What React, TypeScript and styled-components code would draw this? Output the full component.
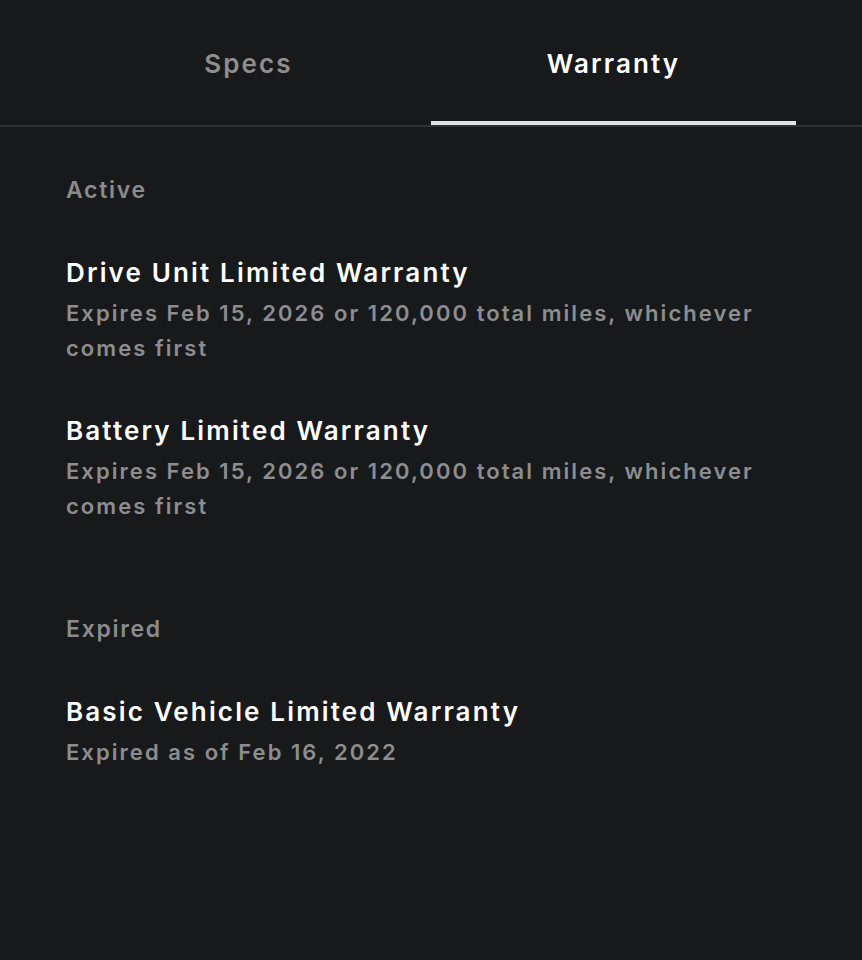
import styled, { createGlobalStyle } from 'styled-components'

const Global = createGlobalStyle`
    html, body {
        margin: 0;
        padding: 0;
        background: #18191b;
    }
    body {
        font-family: Inter, "Open Sans", sans-serif;
        -webkit-font-smoothing: antialiased;
    }
`

const Page = styled.div`
    width: 862px;
    height: 960px;
    background: #18191b;
    color: #ffffff;
`

const TabBar = styled.div`
    display: flex;
    padding: 0 66px;
    height: 125px;
    border-bottom: 2px solid #2f3033;
`

const Tab = styled.div<{ $active?: boolean }>`
    flex: 1;
    display: flex;
    align-items: center;
    justify-content: center;
    padding-top: 1px;
    font-size: 26px;
    font-weight: 600;
    letter-spacing: 2.1px;
    color: ${p => (p.$active ? '#ffffff' : '#8e8e8e')};
    box-shadow: ${p => (p.$active ? 'inset 0 -4px 0 #e2e2e2' : 'none')};
`

const Content = styled.div`
    padding: 48px 66px 0;
    display: flex;
    flex-direction: column;
`

const Section = styled.section`
    display: flex;
    flex-direction: column;
    & + & {
        margin-top: 90px;
    }
`

const SectionLabel = styled.div`
    font-size: 23px;
    font-weight: 600;
    letter-spacing: 1.7px;
    color: #8a8b8d;
    line-height: 30px;
    margin-bottom: 51px;
`

const Item = styled.div`
    display: flex;
    flex-direction: column;
    & + & {
        margin-top: 48px;
    }
`

const Title = styled.div`
    font-size: 26px;
    font-weight: 600;
    letter-spacing: 2.15px;
    line-height: 34px;
    color: #ffffff;
    margin-bottom: 6px;
`

const Detail = styled.div`
    font-size: 22px;
    font-weight: 600;
    letter-spacing: 2.05px;
    line-height: 35px;
    color: #8c8d8f;
`

const sections = [
    {
        label: 'Active',
        items: [
            {
                title: 'Drive Unit Limited Warranty',
                detail: 'Expires Feb 15, 2026 or 120,000 total miles, whichever comes first',
            },
            {
                title: 'Battery Limited Warranty',
                detail: 'Expires Feb 15, 2026 or 120,000 total miles, whichever comes first',
            },
        ],
    },
    {
        label: 'Expired',
        items: [
            {
                title: 'Basic Vehicle Limited Warranty',
                detail: 'Expired as of Feb 16, 2022',
            },
        ],
    },
]

export default function App() {
    return (
        <Page>
            <Global />
            <TabBar>
                <Tab>Specs</Tab>
                <Tab $active>Warranty</Tab>
            </TabBar>
            <Content>
                {sections.map(section => (
                    <Section key={section.label}>
                        <SectionLabel>{section.label}</SectionLabel>
                        {section.items.map(item => (
                            <Item key={item.title}>
                                <Title>{item.title}</Title>
                                <Detail>{item.detail}</Detail>
                            </Item>
                        ))}
                    </Section>
                ))}
            </Content>
        </Page>
    )
}
